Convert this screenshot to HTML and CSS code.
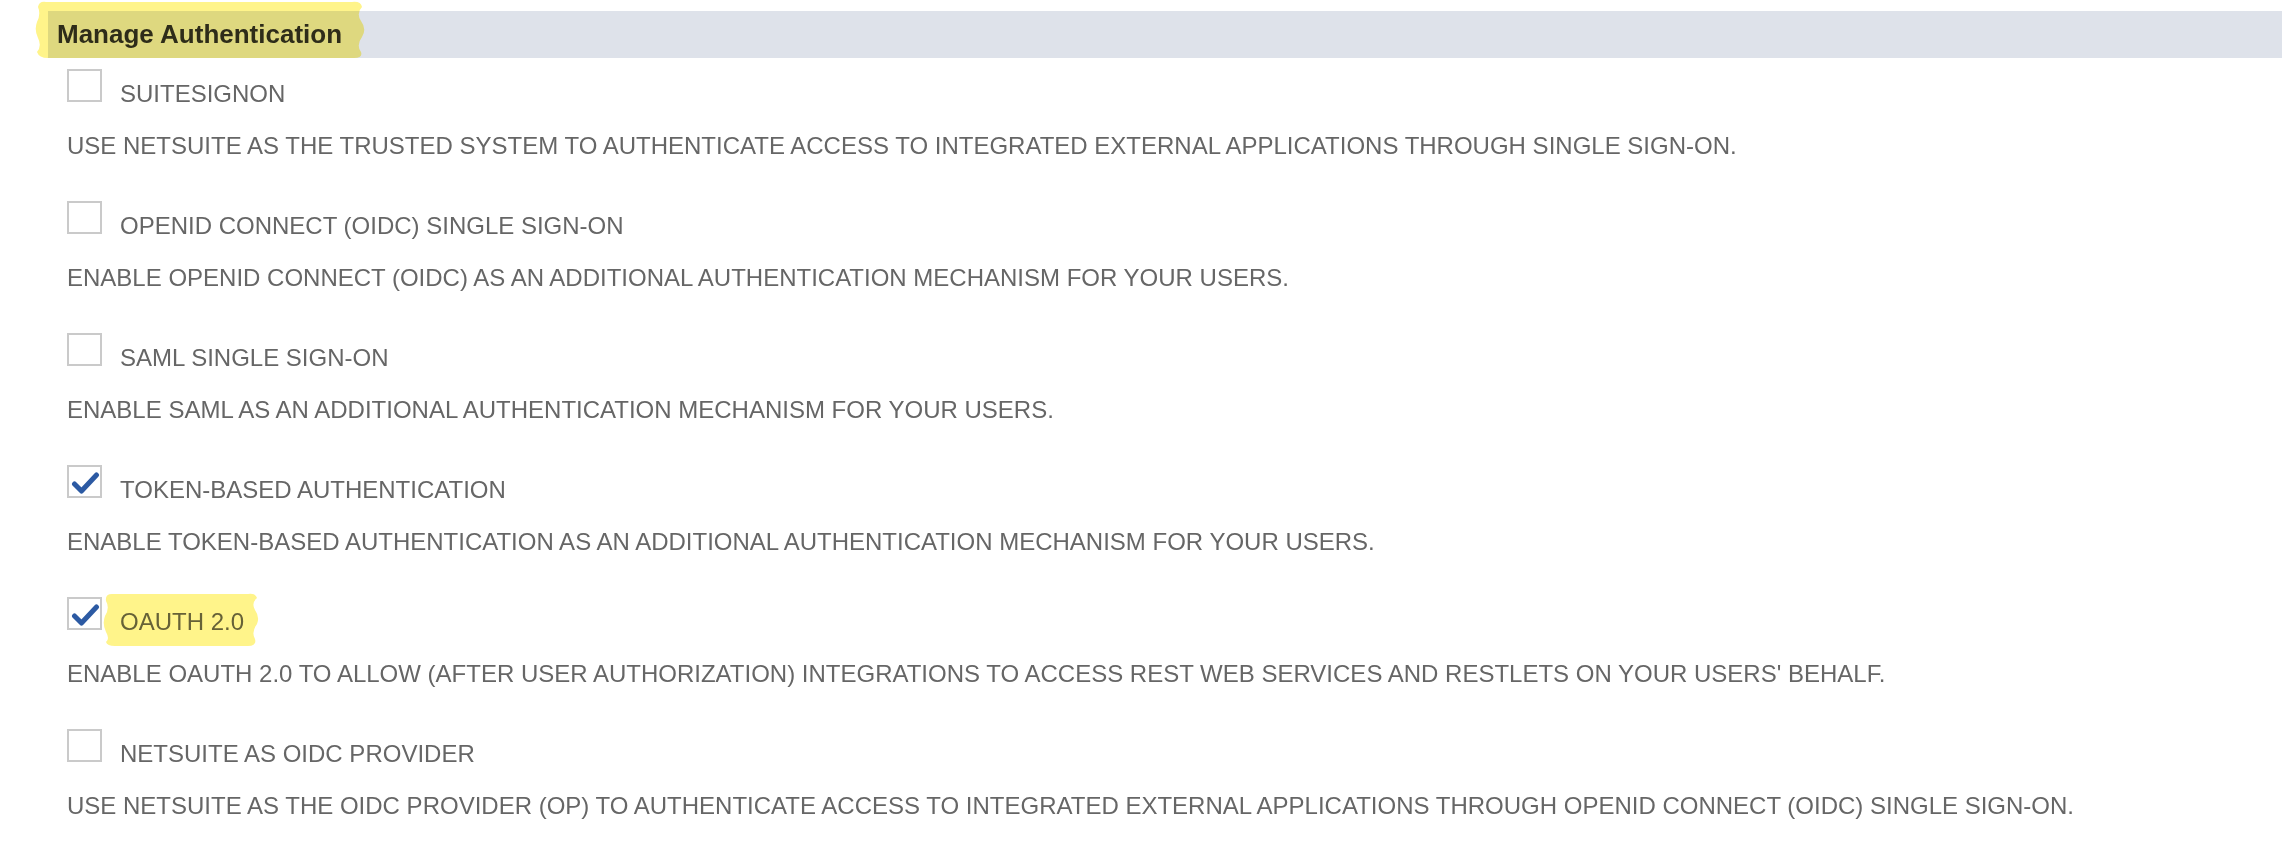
FILE: index.html
```html
<!DOCTYPE html>
<html>
<head>
  <meta charset="utf-8">
  <title>Manage Authentication</title>
  <link rel="stylesheet" href="styles.css">
</head>
<body>
<div class="section">
  <div class="section-bar">
    <h2 class="section-title">Manage Authentication</h2>
    <svg class="marker marker-title" viewBox="0 0 334 57" preserveAspectRatio="none">
      <path d="M12,1 Q5,0 4,6 Q7,13 3,21 Q0,29 4,37 Q8,45 3,51 Q5,57 14,57 L320,57 Q329,57 327,51 Q322,44 328,36 Q333,28 327,20 Q322,12 328,6 Q327,0 318,1 Z"/>
    </svg>
  </div>

  <ul class="opts">
    <li class="opt">
      <div class="opt-head"><span class="box"></span><span class="opt-label">SUITESIGNON</span></div>
      <p class="opt-desc">USE NETSUITE AS THE TRUSTED SYSTEM TO AUTHENTICATE ACCESS TO INTEGRATED EXTERNAL APPLICATIONS THROUGH SINGLE SIGN-ON.</p>
    </li>
    <li class="opt">
      <div class="opt-head"><span class="box"></span><span class="opt-label">OPENID CONNECT (OIDC) SINGLE SIGN-ON</span></div>
      <p class="opt-desc">ENABLE OPENID CONNECT (OIDC) AS AN ADDITIONAL AUTHENTICATION MECHANISM FOR YOUR USERS.</p>
    </li>
    <li class="opt">
      <div class="opt-head"><span class="box"></span><span class="opt-label">SAML SINGLE SIGN-ON</span></div>
      <p class="opt-desc">ENABLE SAML AS AN ADDITIONAL AUTHENTICATION MECHANISM FOR YOUR USERS.</p>
    </li>
    <li class="opt">
      <div class="opt-head">
        <span class="box"><svg class="tick" viewBox="0 0 30 29"><path d="M5,17 L12,24 L27,8"/></svg></span>
        <span class="opt-label">TOKEN-BASED AUTHENTICATION</span>
      </div>
      <p class="opt-desc">ENABLE TOKEN-BASED AUTHENTICATION AS AN ADDITIONAL AUTHENTICATION MECHANISM FOR YOUR USERS.</p>
    </li>
    <li class="opt">
      <div class="opt-head">
        <span class="box"><svg class="tick" viewBox="0 0 30 29"><path d="M5,17 L12,24 L27,8"/></svg></span>
        <span class="opt-label marked">OAUTH 2.0<svg class="marker marker-label" viewBox="0 0 158 53" preserveAspectRatio="none"><path d="M10,1 Q3,1 4,8 Q8,15 3,23 Q0,31 4,39 Q8,46 4,49 Q5,53 13,53 L146,53 Q155,53 153,46 Q149,39 155,31 Q158,24 153,17 Q149,10 155,5 Q154,0 146,1 Z"/></svg></span>
      </div>
      <p class="opt-desc">ENABLE OAUTH 2.0 TO ALLOW (AFTER USER AUTHORIZATION) INTEGRATIONS TO ACCESS REST WEB SERVICES AND RESTLETS ON YOUR USERS' BEHALF.</p>
    </li>
    <li class="opt">
      <div class="opt-head"><span class="box"></span><span class="opt-label">NETSUITE AS OIDC PROVIDER</span></div>
      <p class="opt-desc">USE NETSUITE AS THE OIDC PROVIDER (OP) TO AUTHENTICATE ACCESS TO INTEGRATED EXTERNAL APPLICATIONS THROUGH OPENID CONNECT (OIDC) SINGLE SIGN-ON.</p>
    </li>
  </ul>
</div>
</body>
</html>
```

FILE: styles.css
```css
body{margin: 0;padding: 0;background: #fff;font-family: "Liberation Sans", Arial, sans-serif;color: #666;}
h2,p,ul{margin: 0;padding: 0;}
ul{list-style: none;}

.section{padding-top: 11px;}
.section-bar{position: relative;margin-left: 48px;height: 47px;background-color: #dee2ea;}
.section-title{padding-left: 9px;font-size: 26px;line-height: 47px;font-weight: bold;color: #2e2e2e;}

/* highlighter strokes */
.marker{position: absolute;fill: #fff48a;mix-blend-mode: multiply;pointer-events: none;}
.marker-title{left: -14px;top: -10px;width: 334px;height: 57px;}
.marker-label{left: -18px;top: -14px;width: 158px;height: 53px;}

.opts{padding: 11px 0 0 67px;}
.opt{height: 132px;}
.opt-head{display: flex;align-items: baseline;}
.box{display: inline-block;box-sizing: border-box;width: 35px;height: 33px;border: 2px solid #cacaca;background: #fff;position: relative;}
.tick{display: block;width: 31px;height: 29px;fill: none;stroke: #2c5aa3;stroke-width: 5;stroke-linecap: round;stroke-linejoin: round;}
.opt-label{position: relative;margin-left: 18px;font-size: 24px;line-height: 30px;}
.opt-desc{margin-top: 22px;font-size: 24px;line-height: 30px;}
```
